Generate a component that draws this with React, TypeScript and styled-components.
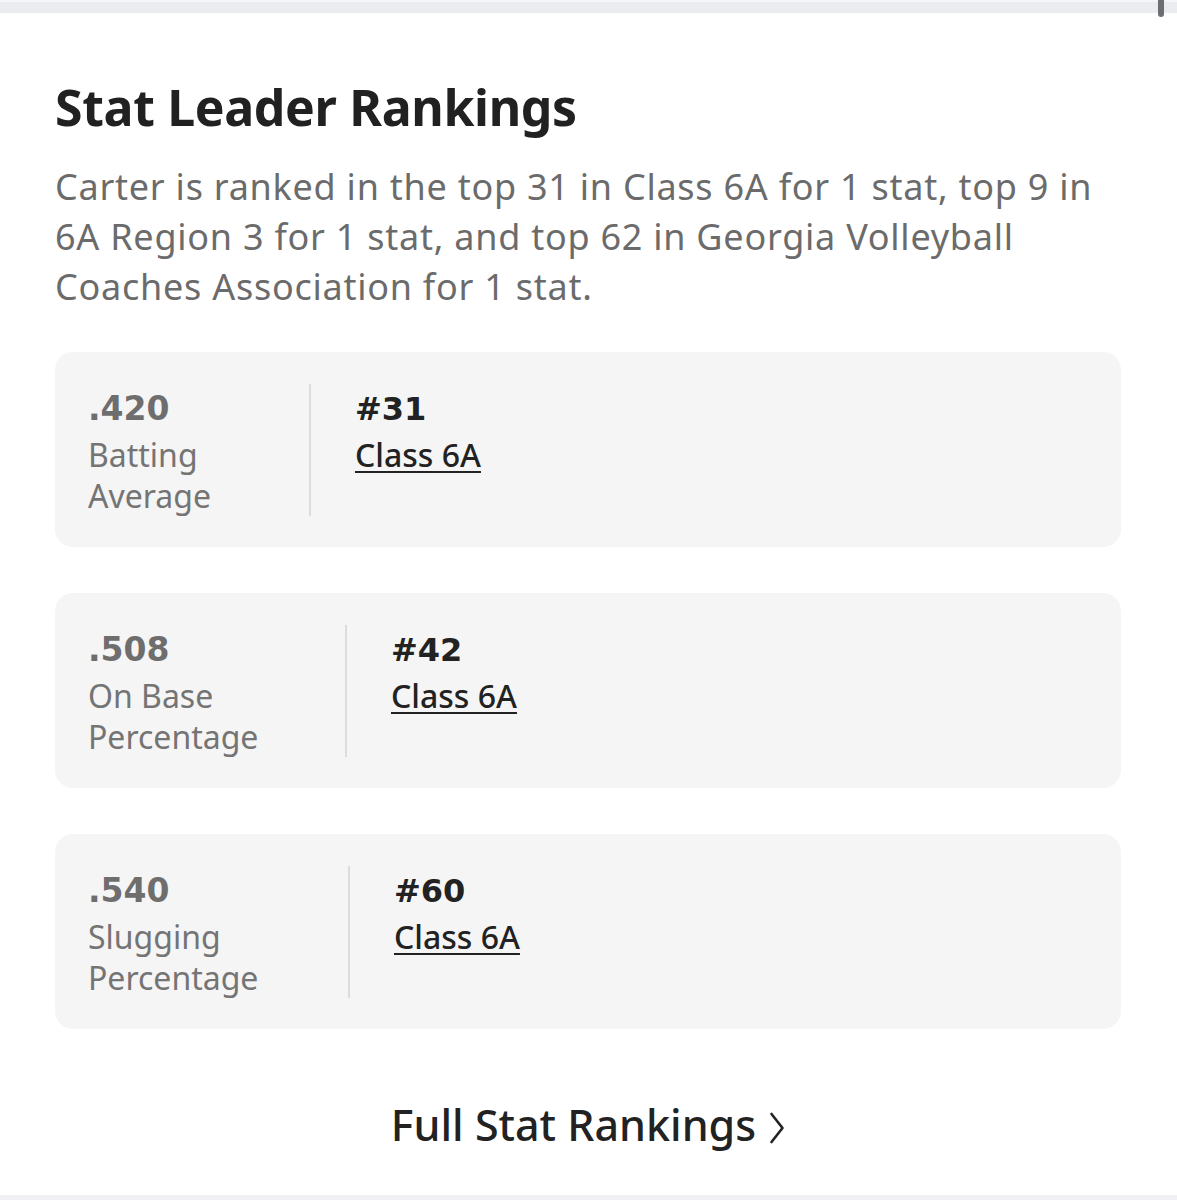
import React from 'react';
import styled, { createGlobalStyle } from 'styled-components';

interface Ranking {
  value: string;
  label: string;
  rank: string;
  group: string;
  labelWidth: number;
}

const rankings: Ranking[] = [
  { value: '.420', label: 'Batting Average', rank: '#31', group: 'Class 6A', labelWidth: 221 },
  { value: '.508', label: 'On Base Percentage', rank: '#42', group: 'Class 6A', labelWidth: 257 },
  { value: '.540', label: 'Slugging Percentage', rank: '#60', group: 'Class 6A', labelWidth: 260 },
];

const App = () => (
  <>
    <GlobalStyle />
    <Page>
      <TopStrip />
      <ScrollThumb />
      <Content>
        <Title>Stat Leader Rankings</Title>
        <Summary>
          Carter is ranked in the top 31 in Class 6A for 1 stat, top 9 in 6A Region 3 for 1 stat, and top 62 in
          Georgia Volleyball Coaches Association for 1 stat.
        </Summary>
        <CardList>
          {rankings.map(item => (
            <Card key={item.label}>
              <StatColumn $width={item.labelWidth}>
                <StatValue>{item.value}</StatValue>
                <StatLabel>{item.label}</StatLabel>
              </StatColumn>
              <Divider />
              <RankColumn>
                <Rank>{item.rank}</Rank>
                <GroupLink href="#">{item.group}</GroupLink>
              </RankColumn>
            </Card>
          ))}
        </CardList>
        <FullLink href="#">
          Full Stat Rankings
          <Chevron viewBox="0 0 16 32" width="16" height="32">
            <path d="M2.5 2 L13.5 16 L2.5 30" fill="none" stroke="#222" strokeWidth="2.6" strokeLinecap="round" strokeLinejoin="round" />
          </Chevron>
        </FullLink>
      </Content>
      <BottomStrip />
    </Page>
  </>
);

const GlobalStyle = createGlobalStyle`
  html, body {
    margin: 0;
    padding: 0;
    background: #ffffff;
  }
  body {
    font-family: "Noto Sans", "Open Sans", sans-serif;
  }
`;

const Page = styled.div`
  position: relative;
  width: 1177px;
  height: 1200px;
  display: flex;
  flex-direction: column;
  background: #fff;
  overflow: hidden;
`;

const TopStrip = styled.div`
  height: 11px;
  border-top: 2px solid #f6f6f8;
  background: #ebecef;
  flex: none;
`;

const ScrollThumb = styled.div`
  position: absolute;
  top: 0;
  left: 1158px;
  width: 6px;
  height: 17px;
  border-radius: 0 0 3px 3px;
  background: #6d6e72;
`;

const Content = styled.div`
  flex: 1;
  padding: 64px 56px 0 55px;
  display: flex;
  flex-direction: column;
`;

const Title = styled.h2`
  margin: 0;
  font-size: 50px;
  line-height: 60px;
  font-weight: 700;
  color: #212121;
  letter-spacing: -0.35px;
`;

const Summary = styled.p`
  margin: 25px 0 0;
  font-size: 36px;
  line-height: 50px;
  letter-spacing: 0.75px;
  color: #6b6b6b;
`;

const CardList = styled.div`
  margin-top: 40px;
  display: flex;
  flex-direction: column;
  gap: 46px;
`;

const Card = styled.div`
  display: flex;
  align-items: stretch;
  padding: 32px 33px 31px;
  background: #f5f5f5;
  border-radius: 18px;
`;

const StatColumn = styled.div<{ $width: number }>`
  width: ${p => p.$width}px;
  flex: none;
  display: flex;
  flex-direction: column;
`;

const StatValue = styled.div`
  font-family: "DejaVu Sans", "Noto Sans", sans-serif;
  font-size: 33px;
  line-height: 50px;
  font-weight: 700;
  color: #6e6e6e;
`;

const StatLabel = styled.div`
  width: min-content;
  font-size: 32px;
  line-height: 41px;
  color: #747474;
`;

const Divider = styled.div`
  width: 2px;
  flex: none;
  background: #dcdcdc;
`;

const RankColumn = styled.div`
  padding-left: 44px;
  display: flex;
  flex-direction: column;
  align-items: flex-start;
`;

const Rank = styled.div`
  font-family: "DejaVu Sans", "Noto Sans", sans-serif;
  font-size: 32px;
  line-height: 50px;
  font-weight: 700;
  color: #222;
`;

const GroupLink = styled.a`
  font-size: 32px;
  line-height: 41px;
  font-weight: 500;
  color: #222;
  text-decoration: underline;
  text-decoration-thickness: 2px;
  text-underline-offset: 4px;
`;

const FullLink = styled.a`
  margin-top: 72px;
  align-self: center;
  display: flex;
  align-items: center;
  gap: 13px;
  font-size: 43px;
  line-height: 48px;
  font-weight: 500;
  color: #222;
  text-decoration: none;
`;

const Chevron = styled.svg`
  margin-top: 6px;
`;

const BottomStrip = styled.div`
  height: 5px;
  flex: none;
  background: #efeff4;
`;

export default App;
